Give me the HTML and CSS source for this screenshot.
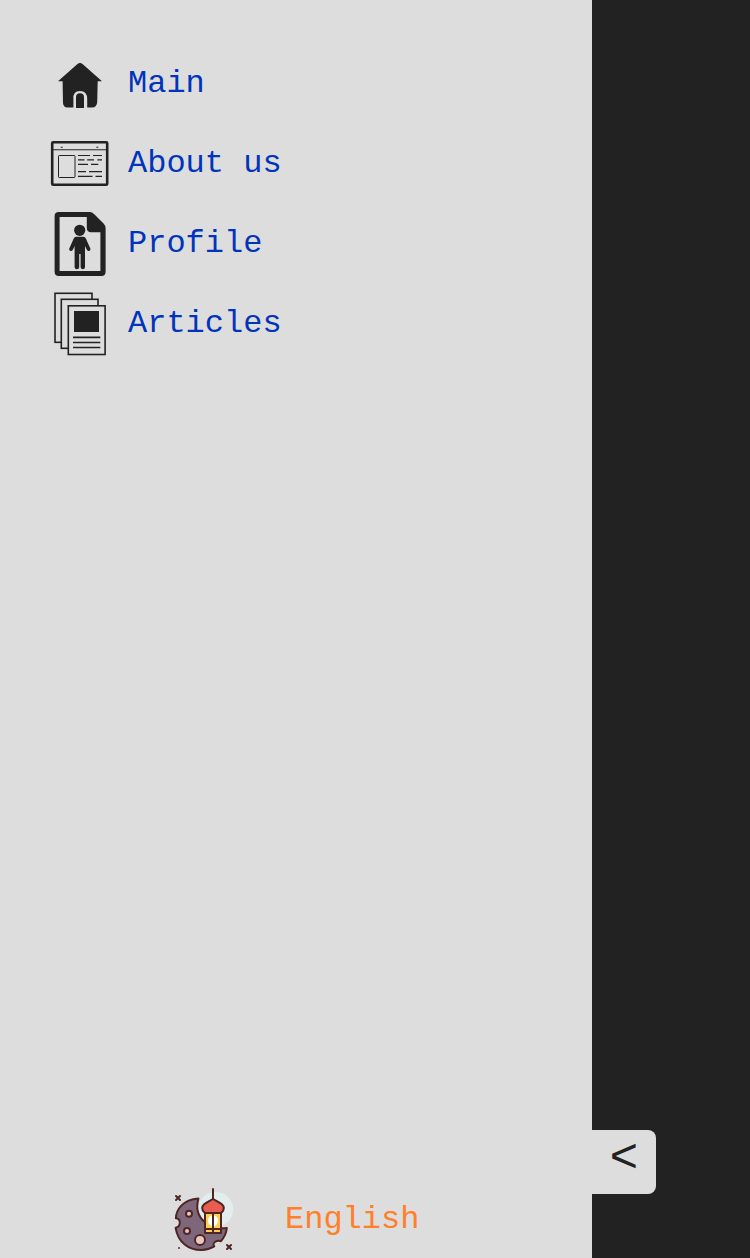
FILE: index.html
```html
<!DOCTYPE html>
<html lang="en">
<head>
<meta charset="utf-8">
<title>Menu</title>
<link rel="stylesheet" href="styles.css">
</head>
<body>
<aside class="sidebar">
  <nav class="menu">
    <a class="item" href="#">
      <svg class="icon" viewBox="0 0 64 64"><path fill="#222" d="M10 29.2 29.2 12.2Q32 9.8 34.8 12.2L54 29.2H49.7L49.2 50Q49 55.4 44 55.6H39.2V47Q39.2 39 32 39T25.4 47V55.6H19.5Q15.2 55.2 15 51L14.6 29.2Z"/><path fill="#222" d="M28 56V45.5Q28 41.3 32 41.3T36 45.5V56Z"/></svg>
      <span>Main</span>
    </a>
    <a class="item" href="#">
      <svg class="icon" viewBox="0 0 64 64" fill="none" stroke="#222"><rect x="4.2" y="10.3" width="55" height="42.4" rx="1" stroke-width="2.6"/><path stroke-width="1.1" d="M4 17.8H59"/><rect x="10.5" y="23.5" width="16.5" height="22" rx=".7" stroke-width="1"/><path stroke-width="1.1" d="M12.7 15.2h2M48.3 15.2h2M30 23.5h12M45 23.5h9M30 27.9h6.5M39.2 27.9H46M49.4 27.9H54M30 32.4h10M43 32.4h7.3M30 39.6h8M41 39.6h13M30 44.4h14.5M47.5 44.4H54"/></svg>
      <span>About us</span>
    </a>
    <a class="item" href="#">
      <svg class="icon" viewBox="0 0 64 64" fill="#222"><path fill-rule="evenodd" d="M10.8 0H42Q44 0 46 2L55.8 11.8Q57.6 13.8 57.6 16V59.8Q57.6 64 53.4 64H10.8Q6.6 64 6.6 59.8V4.2Q6.6 0 10.8 0ZM11.6 5V59H52.4V20.2H43Q38.8 20.2 38.8 15.8V5Z"/><circle cx="31.7" cy="18.3" r="5.6"/><path d="M28 24.8H35.5Q37.2 24.8 38 26.7L42.2 36.2Q43 38.2 41.2 38.9T38.7 37.6L37 34V55Q37 57.3 34.9 57.3T32.6 55V42H31.2V55Q31.2 57.3 28.9 57.3T26.6 55V34L25 37.6Q24.2 39.5 22.4 38.9T21.4 36.2L25.6 26.7Q26.4 24.8 28 24.8Z"/></svg>
      <span>Profile</span>
    </a>
    <a class="item" href="#">
      <svg class="icon" viewBox="0 0 64 64" fill="#ddd" stroke="#222" stroke-width="1.6"><rect x="7" y="1.3" width="37" height="49"/><rect x="13.3" y="7.3" width="36.7" height="49"/><rect x="20.3" y="13.8" width="36.8" height="48.7"/><path fill="#222" stroke="none" d="M26 19h25v21H26z"/><path d="M25 45.4h27.3M25 50.5h27.3M25 55.5h27.3"/></svg>
      <span>Articles</span>
    </a>
  </nav>
  <a class="language" href="#">
    <svg class="icon" viewBox="0 0 64 64" stroke="#4f2424" stroke-width="2" stroke-linecap="round" stroke-linejoin="round"><circle cx="43.7" cy="21.5" r="17.5" fill="#e3edee" stroke="none"/><path fill="#7e677b" d="M26.4 10.4C10.5 11.5 4.2 22 3.9 30.2C9.2 30.8 9.2 38.6 3.6 39.8C6 54 16 62 29.5 62Q36.5 61.7 42.3 58.3C39.5 54.8 44.8 52 48.8 53.2Q54.2 47.5 54.8 40C40 42 20.5 32 26.4 10.4Z"/><g fill="#e9c8bd"><circle cx="17" cy="25.8" r="3"/><circle cx="15" cy="43" r="3"/><circle cx="28" cy="52" r="5"/></g><path fill="#ffcd52" d="M33 25H49V45H33z"/><ellipse cx="41" cy="32.8" rx="5" ry="5.6" fill="#fff" stroke="none"/><path fill="none" d="M41 1V45M33 40.9H49"/><path fill="#e75d50" d="M41 11C34 15 30.2 16.2 30.2 20.3Q30.2 23 32.8 25H49.2Q51.8 23 51.8 20.3C51.8 16.2 48 15 41 11Z"/><path fill="none" d="m4 8 4 4m0-4-4 4M55 57l4 4m0-4-4 4"/><circle cx="7" cy="60" r=".9" fill="#4f2424" stroke="none"/></svg>
    <span>English</span>
  </a>
  <button class="toggle" type="button">&lt;</button>
</aside>
</body>
</html>
```
FILE: styles.css
```css
* { box-sizing: border-box; }

body {
  margin: 0;
  background: #222;
  font: 32px/64px "Liberation Mono", monospace;
}

.sidebar {
  position: relative;
  display: flex;
  flex-direction: column;
  justify-content: space-between;
  width: 592px;
  height: 1258px;
  padding: 52px 0 6px 48px;
  background: #ddd;
}

.menu {
  display: flex;
  flex-direction: column;
  gap: 16px;
}

.item, .language {
  display: flex;
  height: 64px;
  text-decoration: none;
}

.item {
  gap: 16px;
  color: #0034bb;
}

.icon {
  flex: none;
  width: 64px;
  height: 64px;
}

.language {
  gap: 49px;
  padding-left: 124px;
  color: #ff7f2a;
}

/* Handle attached to the outer edge of the open menu */
.toggle {
  position: absolute;
  left: 100%;
  bottom: 64px;
  width: 64px;
  height: 64px;
  padding: 0 0 6px;
  border: 0;
  border-radius: 0 8px 8px 0;
  background: #ddd;
  color: #222;
  font: 48px/54px "Liberation Mono", monospace;
}
```
